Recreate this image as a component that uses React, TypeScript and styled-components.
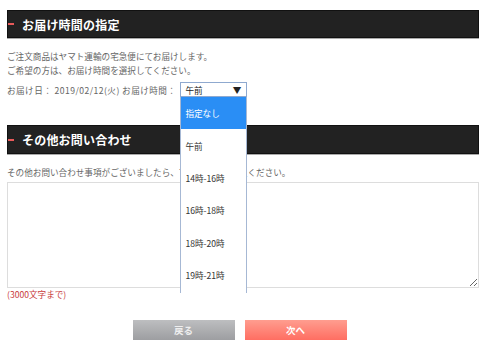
import styled, { createGlobalStyle } from "styled-components";

const GlobalStyle = createGlobalStyle`
  html, body {
    margin: 0;
    padding: 0;
    background: #fff;
  }
  body {
    font-family: "Noto Sans CJK JP", "Noto Sans", sans-serif;
    color: #555;
  }
`;

const timeOptions = ["指定なし", "午前", "14時-16時", "16時-18時", "18時-20時", "19時-21時"];

const StyledPage = styled.div`
  width: 472px;
  padding: 10px 0 0 7px;
`;

const StyledHeading = styled.h2<{ gap: number }>`
  display: flex;
  align-items: center;
  gap: 8px;
  box-sizing: border-box;
  height: ${({ gap }) => (gap ? 29 : 28)}px;
  margin: ${({ gap }) => gap}px 0 0;
  padding-left: 0;
  background: #222;
  border: 1px solid #111;
  box-shadow: 0 1px 0 #aaa;
  color: #fff;
  font-size: 12px;
  font-weight: 700;
  letter-spacing: 0.2px;

  &:before {
    content: "";
    width: 6px;
    height: 2px;
    background: #e85a5a;
  }
`;

const StyledText = styled.p<{ top: number }>`
  margin: ${({ top }) => top}px 0 0;
  font-size: 8.6px;
  line-height: 14px;
  color: #666;
  white-space: nowrap;
`;

const StyledDateRow = styled.div`
  display: flex;
  align-items: center;
  gap: 4px;
  margin-top: 5px;
  height: 15px;
  font-size: 8.6px;
  color: #666;
  white-space: nowrap;

  & > span {
    letter-spacing: 0.45px;
  }
`;

const StyledSelect = styled.div`
  position: relative;
  display: flex;
  align-items: center;
  justify-content: space-between;
  box-sizing: border-box;
  width: 67px;
  height: 15px;
  padding: 0 5px 0 4px;
  background: #fff;
  border: 1px solid #8fa9cf;
  color: #222;
  font-size: 8.6px;

  & span:last-child {
    font-size: 6.5px;
  }
`;

const StyledDropdown = styled.ul`
  position: absolute;
  z-index: 5;
  top: 14px;
  left: -1px;
  width: 67px;
  height: 196px;
  margin: 0;
  padding: 0;
  list-style: none;
  box-sizing: border-box;
  background: #fff;
  border-left: 1px solid #a6b8d4;
  border-right: 1px solid #a6b8d4;
  overflow: hidden;
`;

const StyledOption = styled.li<{ active?: boolean }>`
  height: 32.4px;
  display: flex;
  align-items: center;
  padding-left: 4px;
  font-size: 8.6px;
  color: ${({ active }) => (active ? "#fff" : "#333")};
  background: ${({ active }) => (active ? "#2a8ef5" : "#fff")};
`;

const StyledTextarea = styled.textarea`
  display: block;
  box-sizing: border-box;
  width: 472px;
  height: 106px;
  margin-top: 3px;
  border: 1px solid #ddd;
  resize: both;
  outline: none;
`;

const StyledNote = styled.div`
  font-size: 8.6px;
  line-height: 12px;
  color: #c83a3a;
`;

const StyledButtonRow = styled.div`
  display: flex;
  justify-content: center;
  gap: 10px;
  margin-top: 20px;
  padding-right: 7px;
`;

const StyledButton = styled.button<{ primary?: boolean }>`
  width: 102px;
  height: 20px;
  border: none;
  padding: 0;
  font-family: inherit;
  font-size: 9.5px;
  font-weight: 700;
  color: ${({ primary }) => (primary ? "#fff" : "#eee")};
  background: ${({ primary }) =>
    primary
      ? "linear-gradient(#ff9d8f, #ff6e62)"
      : "linear-gradient(#bdbec0, #9d9ea1)"};
`;

export default function App() {
  return (
    <StyledPage>
      <GlobalStyle />
      <StyledHeading gap={0}>お届け時間の指定</StyledHeading>
      <StyledText top={11}>
        ご注文商品はヤマト運輸の宅急便にてお届けします。
        <br />
        ご希望の方は、お届け時間を選択してください。
      </StyledText>
      <StyledDateRow>
        <span>お届け日： 2019/02/12(火) お届け時間：</span>
        <StyledSelect>
          <span>午前</span>
          <span>▼</span>
          <StyledDropdown>
            {timeOptions.map((option, i) => (
              <StyledOption key={option} active={i === 0}>
                {option}
              </StyledOption>
            ))}
          </StyledDropdown>
        </StyledSelect>
      </StyledDateRow>

      <StyledHeading gap={28}>その他お問い合わせ</StyledHeading>
      <StyledText top={11}>
        その他お問い合わせ事項がございましたら、下記の欄にご記入ください。
      </StyledText>
      <StyledTextarea />
      <StyledNote>(3000文字まで)</StyledNote>

      <StyledButtonRow>
        <StyledButton>戻る</StyledButton>
        <StyledButton primary>次へ</StyledButton>
      </StyledButtonRow>
    </StyledPage>
  );
}
